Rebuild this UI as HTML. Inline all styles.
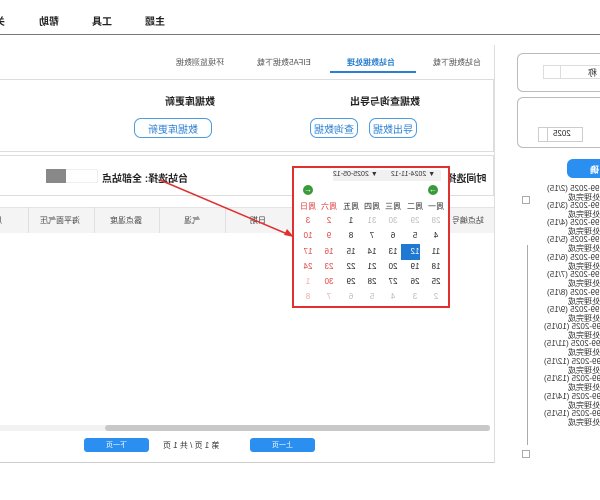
<!DOCTYPE html>
<html><head><meta charset="utf-8"><style>
*{margin:0;padding:0;box-sizing:border-box}
body{width:600px;height:500px;overflow:hidden;background:#fff;position:relative;font-family:"Liberation Sans","Noto Sans CJK SC",sans-serif;color:#222}
.a{position:absolute}
.m{transform:scaleX(-1);white-space:nowrap}
.t{position:absolute;transform:scaleX(-1);white-space:nowrap}
.btn{position:absolute;border:1px solid #4a9be0;border-radius:7px;color:#2a7fd0;font-size:10px;display:flex;align-items:center;justify-content:center}
.cal{position:absolute;left:292px;top:166px;width:158px;height:142px;border:2px solid #e03030}
.row{position:absolute;left:298px;width:148px;display:flex;flex-direction:row-reverse;justify-content:space-between;font-size:8px}
.row span{width:20px;text-align:center;display:inline-block;transform:scaleX(-1)}
.g{color:#bbb}.r{color:#e04040}.lr{color:#f0a8a8}
.li{position:absolute;font-size:8px;color:#333;transform:scaleX(-1);white-space:nowrap}
</style></head><body>
<div class="t" style="left:145px;top:13px;font-size:10px;font-weight:bold">主题</div>
<div class="t" style="left:92px;top:13px;font-size:10px;font-weight:bold">工具</div>
<div class="t" style="left:39px;top:13px;font-size:10px;font-weight:bold">帮助</div>
<div class="t" style="left:-5px;top:13px;font-size:10px;font-weight:bold">关</div>
<div class="a" style="left:0;top:34px;width:600px;height:1px;background:#777"></div>
<div class="a" style="left:0;top:45px;width:495px;height:418px;border-right:1px solid #ddd;border-bottom:1px solid #ccc"></div>
<div class="t" style="left:433px;top:57px;font-size:8px;color:#555">台站数据下载</div>
<div class="t" style="left:347px;top:57px;font-size:8px;color:#2a7fd0;font-weight:bold">台站数据处理</div>
<div class="a" style="left:330px;top:71px;width:86px;height:2px;background:#2a7fd0"></div>
<div class="t" style="left:257px;top:57px;font-size:8px;color:#555">EIFA5数据下载</div>
<div class="t" style="left:176px;top:57px;font-size:8px;color:#555">环境监测数据</div>
<div class="a" style="left:0;top:79px;width:494px;height:73px;border:1px solid #ddd;border-left:none"></div>
<div class="t" style="left:350px;top:93px;font-size:10px;font-weight:bold">数据查询与导出</div>
<div class="t" style="left:165px;top:93px;font-size:10px;font-weight:bold">数据库更新</div>
<div class="btn" style="left:369px;top:118px;width:48px;height:20px"><span class="m">导出数据</span></div>
<div class="btn" style="left:310px;top:118px;width:48px;height:20px"><span class="m">查询数据</span></div>
<div class="btn" style="left:134px;top:118px;width:78px;height:20px"><span class="m">数据库更新</span></div>
<div class="a" style="left:0;top:155px;width:494px;height:41px;border:1px solid #ddd;border-left:none"></div>
<div class="t" style="left:443px;top:170px;font-size:10px;font-weight:bold">时间选择:</div>
<div class="t" style="left:102px;top:170px;font-size:10px;font-weight:bold">台站选择: 全部站点</div>
<div class="a" style="left:46px;top:169px;width:52px;height:14px;border:1px solid #eee"></div>
<div class="a" style="left:46px;top:169px;width:20px;height:14px;background:#888"></div>
<div class="a" style="left:0;top:207px;width:494px;height:26px;background:#f4f4f4;border-top:1px solid #e4e4e4"></div>
<div class="a" style="left:28px;top:207px;width:1px;height:26px;background:#e0e0e0"></div>
<div class="a" style="left:94px;top:207px;width:1px;height:26px;background:#e0e0e0"></div>
<div class="a" style="left:159px;top:207px;width:1px;height:26px;background:#e0e0e0"></div>
<div class="a" style="left:225px;top:207px;width:1px;height:26px;background:#e0e0e0"></div>
<div class="t" style="left:40px;top:215px;font-size:8px;color:#444">海平面气压</div>
<div class="t" style="left:110px;top:215px;font-size:8px;color:#444">露点温度</div>
<div class="t" style="left:184px;top:215px;font-size:8px;color:#444">气温</div>
<div class="t" style="left:250px;top:215px;font-size:8px;color:#444">日期</div>
<div class="t" style="left:452px;top:215px;font-size:8px;color:#444">站点编号</div>
<div class="t" style="left:-6px;top:215px;font-size:8px;color:#444">风</div>
<!-- calendar -->
<div class="a" style="left:294px;top:168px;width:154px;height:138px;background:#fff"></div>
<div class="a" style="left:333px;top:170px;width:108px;height:11px;background:#f1f1f1"></div>
<div class="t" style="left:391px;top:171px;font-size:7px;color:#333">▼ 2024-11-12</div>
<div class="t" style="left:333px;top:171px;font-size:7px;color:#333">▼ 2025-05-12</div>
<div class="a" style="left:303px;top:185px;width:10px;height:10px;border-radius:50%;background:#3a9a3a;color:#fff;font-size:8px;line-height:10px;text-align:center">→</div>
<div class="a" style="left:428px;top:185px;width:10px;height:10px;border-radius:50%;background:#3a9a3a;color:#fff;font-size:8px;line-height:10px;text-align:center">←</div>
<div class="cal"></div>
<div class="row" style="top:201px;color:#333"><span>周一</span><span>周二</span><span>周三</span><span>周四</span><span>周五</span><span class="r">周六</span><span class="r">周日</span></div>
<div class="row" style="top:216px"><span class="g">28</span><span class="g">29</span><span class="g">30</span><span class="g">31</span><span>1</span><span class="r">2</span><span class="r">3</span></div>
<div class="row" style="top:231px"><span>4</span><span>5</span><span>6</span><span>7</span><span>8</span><span class="r">9</span><span class="r">10</span></div>
<div class="a" style="left:401px;top:244px;width:19px;height:16px;background:#1f78d1"></div>
<div class="row" style="top:247px"><span>11</span><span style="color:#fff">12</span><span>13</span><span>14</span><span>15</span><span class="r">16</span><span class="r">17</span></div>
<div class="row" style="top:262px"><span>18</span><span>19</span><span>20</span><span>21</span><span>22</span><span class="r">23</span><span class="r">24</span></div>
<div class="row" style="top:277px"><span>25</span><span>26</span><span>27</span><span>28</span><span>29</span><span class="r">30</span><span class="lr">1</span></div>
<div class="row" style="top:292px"><span class="g">2</span><span class="g">3</span><span class="g">4</span><span class="g">5</span><span class="g">6</span><span class="lr">7</span><span class="lr">8</span></div>
<svg class="a" style="left:0;top:0" width="600" height="500"><line x1="160" y1="180" x2="292" y2="236" stroke="#e03030" stroke-width="1.5"/><polygon points="294,237 284,235 287,229" fill="#e03030"/></svg>
<div class="a" style="left:0;top:425px;width:490px;height:6px;background:#f2f2f2"></div>
<div class="a" style="left:105px;top:425px;width:385px;height:6px;background:#c8c8c8;border-radius:3px"></div>
<div class="btn" style="left:250px;top:438px;width:65px;height:14px;background:#2a8ff0;border:none;border-radius:3px;color:#fff;font-size:7px"><span class="m">上一页</span></div>
<div class="btn" style="left:84px;top:438px;width:65px;height:14px;background:#2a8ff0;border:none;border-radius:3px;color:#fff;font-size:7px"><span class="m">下一页</span></div>
<div class="t" style="left:163px;top:440px;font-size:8px;color:#333">第 1 页 / 共 1 页</div>
<div class="a" style="left:517px;top:53px;width:90px;height:39px;border:1px solid #bbb;border-radius:6px"></div>
<div class="a" style="left:543px;top:65px;width:60px;height:14px;border:1px solid #ddd"></div>
<div class="a" style="left:560px;top:65px;width:1px;height:14px;background:#ddd"></div>
<div class="t" style="left:588px;top:66px;font-size:9px">称</div>
<div class="a" style="left:517px;top:97px;width:90px;height:51px;border:1px solid #bbb;border-radius:6px"></div>
<div class="a" style="left:538px;top:127px;width:45px;height:15px;border:1px solid #ccc"></div>
<div class="a" style="left:547px;top:127px;width:1px;height:15px;background:#ccc"></div>
<div class="t" style="left:553px;top:129px;font-size:8px">2025</div>
<div class="a" style="left:567px;top:159px;width:45px;height:19px;background:#2a8ff0;border-radius:6px"></div>
<div class="t" style="left:590px;top:163px;font-size:9px;color:#fff;font-weight:bold">确</div>
<div class="a" style="left:522px;top:196px;width:8px;height:8px;border:1px solid #aaa"></div>
<div class="a" style="left:527px;top:245px;width:1px;height:200px;background:#aaa"></div>
<div class="a" style="left:522px;top:450px;width:8px;height:8px;border:1px solid #aaa"></div>
<div class="li" style="left:547px;top:184px">99-2025 (2/15)</div>
<div class="li" style="left:568px;top:192px">处理完成</div>
<div class="li" style="left:547px;top:201px">99-2025 (3/15)</div>
<div class="li" style="left:568px;top:209px">处理完成</div>
<div class="li" style="left:547px;top:218px">99-2025 (4/15)</div>
<div class="li" style="left:568px;top:226px">处理完成</div>
<div class="li" style="left:547px;top:235px">99-2025 (5/15)</div>
<div class="li" style="left:568px;top:243px">处理完成</div>
<div class="li" style="left:547px;top:253px">99-2025 (6/15)</div>
<div class="li" style="left:568px;top:261px">处理完成</div>
<div class="li" style="left:547px;top:270px">99-2025 (7/15)</div>
<div class="li" style="left:568px;top:278px">处理完成</div>
<div class="li" style="left:547px;top:288px">99-2025 (8/15)</div>
<div class="li" style="left:568px;top:296px">处理完成</div>
<div class="li" style="left:547px;top:305px">99-2025 (9/15)</div>
<div class="li" style="left:568px;top:313px">处理完成</div>
<div class="li" style="left:544px;top:322px">99-2025 (10/15)</div>
<div class="li" style="left:568px;top:330px">处理完成</div>
<div class="li" style="left:544px;top:339px">99-2025 (11/15)</div>
<div class="li" style="left:568px;top:347px">处理完成</div>
<div class="li" style="left:544px;top:357px">99-2025 (12/15)</div>
<div class="li" style="left:568px;top:365px">处理完成</div>
<div class="li" style="left:544px;top:374px">99-2025 (13/15)</div>
<div class="li" style="left:568px;top:382px">处理完成</div>
<div class="li" style="left:544px;top:392px">99-2025 (14/15)</div>
<div class="li" style="left:568px;top:400px">处理完成</div>
<div class="li" style="left:544px;top:409px">99-2025 (15/15)</div>
<div class="li" style="left:568px;top:417px">处理完成</div>
</body></html>
